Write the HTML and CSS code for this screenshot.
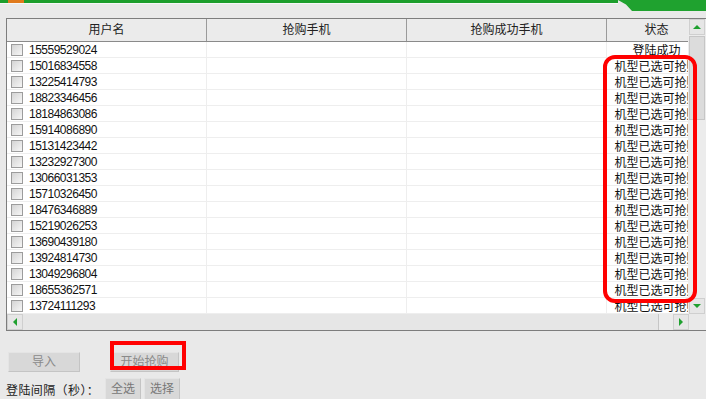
FILE: index.html
```html
<!DOCTYPE html>
<html lang="zh-CN">
<head>
    <meta charset="UTF-8">
    <title>抢购</title>
    <link rel="stylesheet" href="styles.css">
</head>
<body>
    <div class="topbar">
        <div class="topline"><span class="accent"></span></div>
        <div class="tab"></div>
    </div>

    <div class="grid">
        <div class="main">
            <div class="view">
                <div class="row head">
                    <div class="cell">用户名</div>
                    <div class="cell">抢购手机</div>
                    <div class="cell">抢购成功手机</div>
                    <div class="cell">状态</div>
                </div>
                <div class="row"><div class="cell user"><span class="box"></span>15559529024</div><div class="cell"></div><div class="cell"></div><div class="cell state">登陆成功</div></div>
                <div class="row"><div class="cell user"><span class="box"></span>15016834558</div><div class="cell"></div><div class="cell"></div><div class="cell state">机型已选可抢购</div></div>
                <div class="row"><div class="cell user"><span class="box"></span>13225414793</div><div class="cell"></div><div class="cell"></div><div class="cell state">机型已选可抢购</div></div>
                <div class="row"><div class="cell user"><span class="box"></span>18823346456</div><div class="cell"></div><div class="cell"></div><div class="cell state">机型已选可抢购</div></div>
                <div class="row"><div class="cell user"><span class="box"></span>18184863086</div><div class="cell"></div><div class="cell"></div><div class="cell state">机型已选可抢购</div></div>
                <div class="row"><div class="cell user"><span class="box"></span>15914086890</div><div class="cell"></div><div class="cell"></div><div class="cell state">机型已选可抢购</div></div>
                <div class="row"><div class="cell user"><span class="box"></span>15131423442</div><div class="cell"></div><div class="cell"></div><div class="cell state">机型已选可抢购</div></div>
                <div class="row"><div class="cell user"><span class="box"></span>13232927300</div><div class="cell"></div><div class="cell"></div><div class="cell state">机型已选可抢购</div></div>
                <div class="row"><div class="cell user"><span class="box"></span>13066031353</div><div class="cell"></div><div class="cell"></div><div class="cell state">机型已选可抢购</div></div>
                <div class="row"><div class="cell user"><span class="box"></span>15710326450</div><div class="cell"></div><div class="cell"></div><div class="cell state">机型已选可抢购</div></div>
                <div class="row"><div class="cell user"><span class="box"></span>18476346889</div><div class="cell"></div><div class="cell"></div><div class="cell state">机型已选可抢购</div></div>
                <div class="row"><div class="cell user"><span class="box"></span>15219026253</div><div class="cell"></div><div class="cell"></div><div class="cell state">机型已选可抢购</div></div>
                <div class="row"><div class="cell user"><span class="box"></span>13690439180</div><div class="cell"></div><div class="cell"></div><div class="cell state">机型已选可抢购</div></div>
                <div class="row"><div class="cell user"><span class="box"></span>13924814730</div><div class="cell"></div><div class="cell"></div><div class="cell state">机型已选可抢购</div></div>
                <div class="row"><div class="cell user"><span class="box"></span>13049296804</div><div class="cell"></div><div class="cell"></div><div class="cell state">机型已选可抢购</div></div>
                <div class="row"><div class="cell user"><span class="box"></span>18655362571</div><div class="cell"></div><div class="cell"></div><div class="cell state">机型已选可抢购</div></div>
                <div class="row"><div class="cell user"><span class="box"></span>13724111293</div><div class="cell"></div><div class="cell"></div><div class="cell state">机型已选可抢购</div></div>
            </div>
            <div class="vscroll">
                <div class="sbtn"><span class="arrow up"></span></div>
                <div class="vthumb"></div>
                <div class="vtrack"></div>
                <div class="sbtn"><span class="arrow down"></span></div>
            </div>
        </div>
        <div class="hbar">
            <div class="sbtn"><span class="arrow left"></span></div>
            <div class="hthumb"></div>
            <div class="htrack"></div>
            <div class="sbtn"><span class="arrow right"></span></div>
            <div class="corner"></div>
        </div>
    </div>

    <div class="controls">
        <div class="actions">
            <button class="btn wide">导入</button>
            <button class="btn start">开始抢购</button>
        </div>
        <div class="options">
            <span class="label">登陆间隔（秒）：</span>
            <button class="btn small">全选</button>
            <button class="btn small">选择</button>
        </div>
    </div>

    <!-- red marks drawn over the screenshot -->
    <div class="mark state-mark"></div>
    <div class="mark start-mark"></div>
</body>
</html>
```

FILE: styles.css
```css
html {
    font-family: "Liberation Sans", "Noto Sans CJK SC", sans-serif;
    font-size: 12px;
}
body {
    margin: 0;
    background: #e9e9e9;
    color: #111;
    position: relative;
    height: 399px;
    overflow: hidden;
}
.topbar {
    display: flex;
    height: 18px;
}
.topline {
    flex: 1;
    height: 3px;
    background: #1c9e2c;
    border-bottom: 1px solid #f7f7f7;
}
.accent {
    display: block;
    margin-left: 8px;
    width: 16px;
    height: 3px;
    background: #e07a1c;
}
.tab {
    width: 88px;
    height: 11px;
    background: #1fa22f;
    clip-path: polygon(0 0, 100% 0, 100% 100%, 14px 100%, 8px 40%);
}
.grid {
    margin-left: 6px;
    border-top: 1px solid #7d7d7d;
    border-left: 1px solid #7d7d7d;
    border-bottom: 1px solid #7d7d7d;
    background: #fff;
}
.main {
    display: flex;
}
.view {
    width: 681px;
    overflow: hidden;
}
.row {
    display: grid;
    grid-template-columns: 200px 200px 200px 100px;
    width: 700px;
    height: 16px;
    border-bottom: 1px solid #eeeeee;
    box-sizing: border-box;
}
.cell {
    border-right: 1px solid #eeeeee;
    line-height: 18px;
    white-space: nowrap;
    overflow: hidden;
}
.head {
    height: 23px;
    background: #ebebeb;
    border-bottom: 1px solid #8a8a8a;
}
.head .cell {
    border-right: 1px solid #9a9a9a;
    line-height: 23px;
    text-align: center;
    color: #222;
}
.user {
    display: flex;
    align-items: center;
    letter-spacing: -0.5px;
}
.box {
    width: 10px;
    height: 10px;
    margin: 0 6px 0 4px;
    border: 1px solid #9c9c9c;
    background: linear-gradient(135deg, #d4d4d4, #f6f6f6);
}
.state {
    text-align: center;
    text-overflow: clip;
}
.vscroll {
    width: 18px;
    display: flex;
    flex-direction: column;
    background: #ececec;
}
.sbtn {
    width: 16px;
    height: 16px;
    flex: none;
    display: flex;
    align-items: center;
    justify-content: center;
    background: #e6e6e6;
    border: 1px solid #cfcfcf;
    box-sizing: border-box;
}
.vscroll .sbtn {
    margin-left: 1px;
}
.vthumb {
    height: 84px;
    margin: 1px 1px 0;
    background: #dcdcdc;
    border: 1px solid #c6c6c6;
    box-sizing: border-box;
}
.vtrack {
    flex: 1;
}
.arrow {
    width: 0;
    height: 0;
    border: 4px solid transparent;
}
.up {
    border-bottom: 4px solid #1fa02f;
    margin-top: -4px;
}
.down {
    border-top: 4px solid #1fa02f;
    margin-bottom: -4px;
}
.left {
    border-right: 4px solid #1fa02f;
    margin-left: -4px;
}
.right {
    border-left: 4px solid #1fa02f;
    margin-right: -4px;
}
.hbar {
    display: flex;
    height: 16px;
    background: #ececec;
}
.hthumb {
    width: 635px;
    background: #e6e6e6;
    border-right: 1px solid #c6c6c6;
}
.htrack {
    width: 14px;
}
.corner {
    flex: 1;
    background: #e9e9e9;
}
.controls {
    padding: 21px 0 0 8px;
}
.actions {
    display: flex;
    gap: 30px;
}
.btn {
    font-family: inherit;
    font-size: 12px;
    color: #8a8a8a;
    background: #d8d8d8;
    border: 1px solid #e4e4e4;
    border-right-color: #c4c4c4;
    border-bottom-color: #c4c4c4;
    padding: 0;
    height: 20px;
    line-height: 18px;
}
.wide {
    width: 72px;
}
.start {
    width: 69px;
}
.options {
    display: flex;
    align-items: center;
    margin: 6px 0 0 -2px;
}
.label {
    width: 99px;
    color: #222;
    letter-spacing: 0.4px;
}
.small {
    width: 36px;
    height: 22px;
    margin-right: 3px;
    color: #777;
}
.mark {
    position: absolute;
    border: 4px solid #f00;
}
.state-mark {
    left: 603px;
    top: 55px;
    width: 86px;
    height: 240px;
    border-radius: 12px;
}
.start-mark {
    left: 110px;
    top: 341px;
    width: 68px;
    height: 21px;
}
```
